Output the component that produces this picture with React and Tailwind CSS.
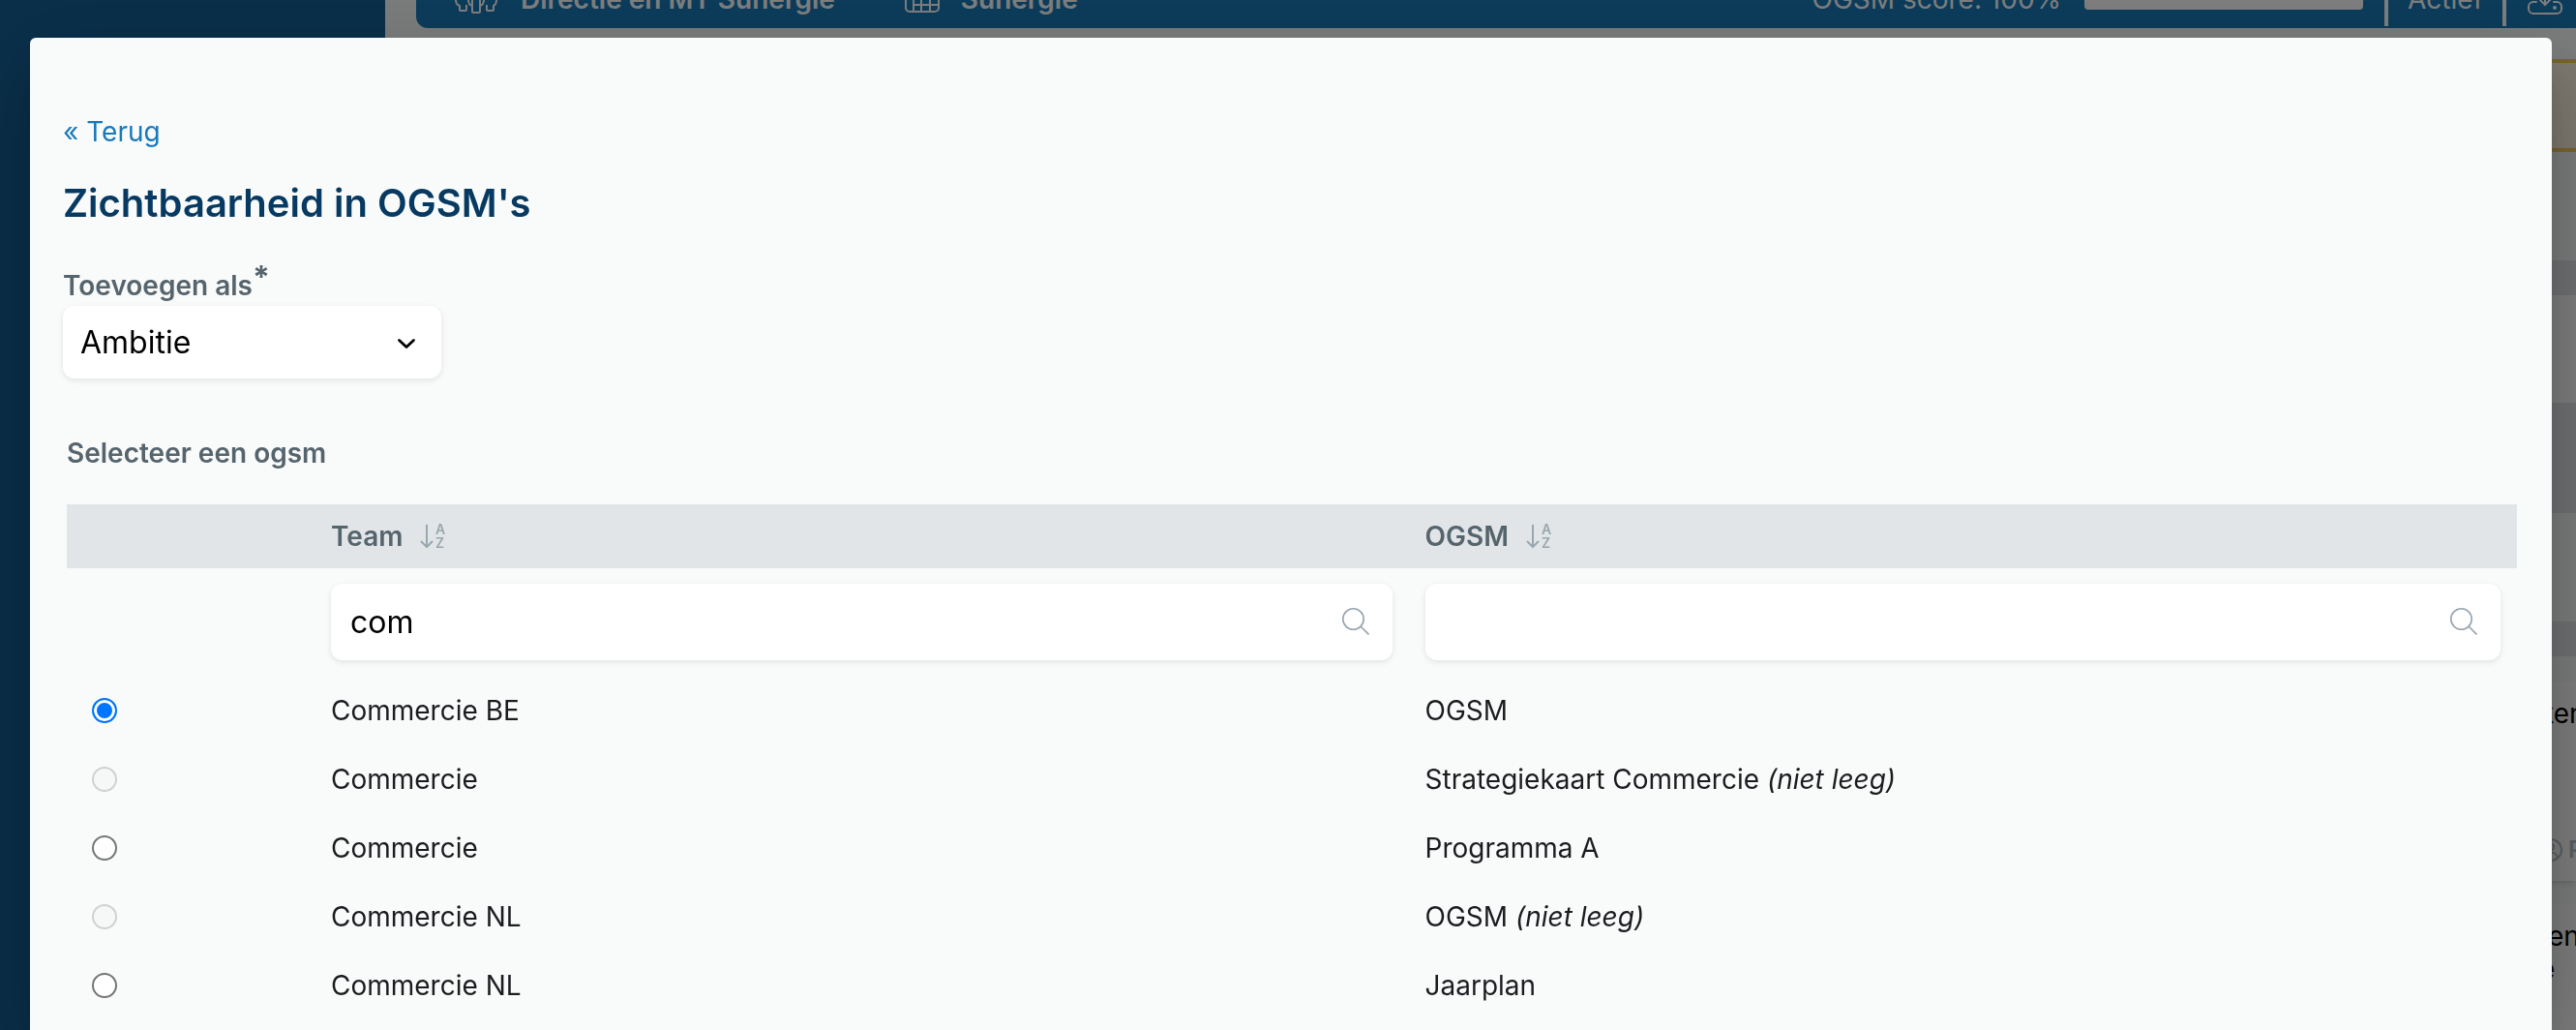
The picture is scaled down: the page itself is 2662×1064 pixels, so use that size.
import { useState } from 'react';

const rows = [
    { id: 1, team: 'Commercie BE', ogsm: 'OGSM', empty: true },
    { id: 2, team: 'Commercie', ogsm: 'Strategiekaart Commercie', empty: false },
    { id: 3, team: 'Commercie', ogsm: 'Programma A', empty: true },
    { id: 4, team: 'Commercie NL', ogsm: 'OGSM', empty: false },
    { id: 5, team: 'Commercie NL', ogsm: 'Jaarplan', empty: true },
];

function TeamIcon() {
    return (
        <svg width="46" height="30" viewBox="0 0 46 30" fill="none" stroke="currentColor" strokeWidth="2" strokeLinejoin="round" aria-hidden="true">
            <circle cx="8" cy="5" r="3" />
            <circle cx="22" cy="4" r="3" />
            <circle cx="36" cy="5" r="3" />
            <path d="M11 11H3c-1 0-2 1-2 2v3c0 3 1 5 4 6v4c0 1 0 1 1 1h5c1 0 1 0 1-1v-5" />
            <path d="M14 13v3c0 3 1 5 4 6v6c0 1 0 1 1 1h6c1 0 1 0 1-1v-6c3-1 4-3 4-6v-3c0-1-1-2-2-2H16c-1 0-2 1-2 2z" />
            <path d="M18 15v7M26 15v7" />
            <path d="M33 11h8c1 0 2 1 2 2v3c0 3-1 5-3 6v4c0 1 0 1-1 1h-5c-1 0-1 0-1-1v-5" />
        </svg>
    );
}

function GridIcon() {
    return (
        <svg width="36" height="28" viewBox="0 0 36 28" fill="none" stroke="currentColor" strokeWidth="2" aria-hidden="true">
            <rect x="1" y="1" width="34" height="26" rx="4" />
            <path d="M9 9v18M17 9v18M26 9v18M1 9h34M9 20h26" />
        </svg>
    );
}

function DownloadIcon() {
    return (
        <svg width="36" height="32" viewBox="0 0 36 32" fill="none" stroke="currentColor" strokeWidth="2" strokeLinecap="round" aria-hidden="true">
            <path d="M9 19H6a5 5 0 0 0-5 5v2a5 5 0 0 0 5 5h24a5 5 0 0 0 5-5v-2a5 5 0 0 0-5-5h-3" />
            <path d="M18 2v20M12 16l6 6 6-6" />
            <circle cx="28" cy="25" r="1" />
        </svg>
    );
}

function SortIcon() {
    return (
        <svg width="26" height="26" viewBox="0 0 26 26" fill="none" aria-hidden="true" className="text-[#9aa7ae]">
            <path d="M7 1v23M1 18l6 6 6-6" stroke="currentColor" strokeWidth="2" strokeLinejoin="round" />
            <text x="16" y="11" fontSize="14" fontWeight="600" fill="currentColor">A</text>
            <text x="16" y="25" fontSize="14" fontWeight="600" fill="currentColor">Z</text>
        </svg>
    );
}

function SearchIcon() {
    return (
        <svg width="28" height="28" viewBox="0 0 28 28" fill="none" stroke="#97a4ad" strokeWidth="1.6" aria-hidden="true" className="pointer-events-none absolute right-6 top-[25px]">
            <circle cx="11.5" cy="11.5" r="10.7" />
            <path d="M19 19l8.5 8.5" />
        </svg>
    );
}

function UserIcon() {
    return (
        <svg width="24" height="24" viewBox="0 0 24 24" fill="none" stroke="currentColor" strokeWidth="2" aria-hidden="true" className="shrink-0">
            <circle cx="12" cy="12" r="11" />
            <circle cx="12" cy="9" r="3" />
            <path d="M5 20c1-7 13-7 14 0" />
        </svg>
    );
}

function SearchField({ label, value, onChange }) {
    return (
        <div className="relative">
            <input
                type="text"
                aria-label={label}
                value={value}
                onChange={(e) => onChange(e.target.value)}
                className="block h-[79px] w-full rounded-xl bg-white pl-5 pr-16 text-[32px] text-black shadow-[0_2px_6px_rgba(0,0,0,0.1)] outline-none"
            />
            <SearchIcon />
        </div>
    );
}

// The page behind the dialog, scrolled down a little
function Page() {
    return (
        <div className="flex h-screen overflow-hidden bg-[#f9fbfa]">
            <aside className="w-[398px] shrink-0 bg-[#146095]" />
            <main className="-mt-[31px] min-w-0 flex-1 pl-8">
                <header className="flex h-[60px] items-center rounded-bl-xl bg-[#187ab8] pl-10 pr-[14px] text-[28px] text-white">
                    <TeamIcon />
                    <span className="ml-[22px] font-semibold">Directie en MT Sunergie</span>
                    <span className="ml-[72px]"><GridIcon /></span>
                    <span className="ml-[22px] font-semibold">Sunergie</span>
                    <span className="ml-auto">OGSM score: 100%</span>
                    <div className="ml-6 h-[22px] w-72 rounded bg-white" />
                    <div className="ml-[22px] flex h-14 items-center border-x-4 border-white px-5">Actief</div>
                    <span className="ml-[22px]"><DownloadIcon /></span>
                </header>
                <div className="mt-8 h-24 border-y-4 border-[#f3cb62] bg-[#fff6e3]" />
                <div className="mt-28 h-9 bg-[#e1e5e8]" />
                <div className="h-[111px] bg-white shadow-md" />
                <div className="h-[114px] bg-[#e1e5e8]" />
                <div className="h-28" />
                <div className="h-9 bg-[#e1e5e8]" />
                <div className="flex flex-col gap-6 pt-[26px] text-[28px] leading-[34px] text-black">
                    <div className="flex h-[206px] justify-end bg-white pt-4 shadow-md">
                        <div className="flex w-[38px] flex-col overflow-hidden whitespace-nowrap">
                            <span>ken</span>
                            <span className="mt-[108px] flex items-center gap-[6px] text-2xl font-semibold text-[#b3c0c8]">
                                <UserIcon />
                                P
                            </span>
                        </div>
                    </div>
                    <div className="flex h-[206px] justify-end bg-white pt-4 shadow-md">
                        <div className="w-[38px] overflow-hidden whitespace-nowrap">
                            ten
                            <br />e
                        </div>
                    </div>
                </div>
            </main>
        </div>
    );
}

export default function App() {
    const [type, setType] = useState('Ambitie');
    const [selected, setSelected] = useState(1);
    const [team, setTeam] = useState('com');
    const [ogsm, setOgsm] = useState('');

    const visible = rows.filter(row =>
        row.team.toLowerCase().includes(team.toLowerCase()) &&
        row.ogsm.toLowerCase().includes(ogsm.toLowerCase())
    );

    return (
        <div className="font-['Inter',sans-serif]">
            <Page />
            <div className="fixed inset-0 bg-black/50" />

            <div
                role="dialog"
                aria-labelledby="dialog-title"
                className="fixed bottom-0 left-[31px] right-[25px] top-[39px] overflow-hidden rounded-t-md bg-[#f9fbfa] pl-[34px] pr-8 pt-[77px] text-[28px] leading-10 text-[#1b1c20] shadow-[0_22px_30px_-14px_rgba(0,0,0,0.2),0_48px_76px_6px_rgba(0,0,0,0.14),0_18px_92px_16px_rgba(0,0,0,0.12)]"
            >
                <a href="#terug" className="block w-fit text-[#1879bd]">« Terug</a>
                <h1 id="dialog-title" className="mt-[30px] text-[40px] font-semibold leading-[48px] text-[#073a62]">
                    Zichtbaarheid in OGSM's
                </h1>

                <label htmlFor="type" className="mt-10 flex h-[42px] items-center font-semibold text-[#56646d]">
                    Toevoegen als<sup className="-top-2 text-[32px] font-bold leading-none">*</sup>
                </label>
                <div className="relative w-[391px]">
                    <select
                        id="type"
                        value={type}
                        onChange={(e) => setType(e.target.value)}
                        className="block h-[75px] w-full appearance-none rounded-xl bg-white px-[18px] text-[32px] text-black shadow-[0_2px_6px_rgba(0,0,0,0.1)] outline-none"
                    >
                        <option value="Ambitie">Ambitie</option>
                        <option value="Doelstelling">Doelstelling</option>
                    </select>
                    <svg width="20" height="12" viewBox="0 0 20 12" fill="none" stroke="black" strokeWidth="2.8" strokeLinecap="round" strokeLinejoin="round" aria-hidden="true" className="pointer-events-none absolute right-[26px] top-[33px]">
                        <path d="M2.5 2.5L10 9.5l7.5-7" />
                    </svg>
                </div>

                <section className="mt-[57px] px-1">
                    <h2 id="table-title" className="font-semibold text-[#56646d]">Selecteer een ogsm</h2>
                    <table aria-labelledby="table-title" className="mt-[33px] w-full table-fixed text-left">
                        <thead>
                            <tr className="h-[66px] bg-[#e1e5e8] text-[#56646d]">
                                <td className="w-64" />
                                <th className="w-[44.65%] px-[17px] font-semibold">
                                    <button className="flex items-center gap-[18px]">Team <SortIcon /></button>
                                </th>
                                <th className="px-[17px] font-semibold">
                                    <button className="flex items-center gap-[18px]">OGSM <SortIcon /></button>
                                </th>
                            </tr>
                        </thead>
                        <tbody>
                            <tr>
                                <td />
                                <td className="px-[17px] py-4">
                                    <SearchField label="Zoek team" value={team} onChange={setTeam} />
                                </td>
                                <td className="px-[17px] py-4">
                                    <SearchField label="Zoek OGSM" value={ogsm} onChange={setOgsm} />
                                </td>
                            </tr>
                            {visible.map(row => (
                                <tr key={row.id} className="h-[71px]">
                                    <td className="px-[26px]">
                                        <input
                                            type="radio"
                                            name="ogsm"
                                            id={`ogsm-${row.id}`}
                                            checked={selected === row.id}
                                            disabled={!row.empty}
                                            onChange={() => setSelected(row.id)}
                                            className="block size-[26px] appearance-none rounded-full border-2 border-[#767676] bg-white checked:border-[#0075ff] checked:bg-[#0075ff] checked:shadow-[inset_0_0_0_3px_white] disabled:border-[#d0d2d1] disabled:bg-[#f6f7f7]"
                                        />
                                    </td>
                                    <td className="px-[17px]">
                                        <label htmlFor={`ogsm-${row.id}`}>{row.team}</label>
                                    </td>
                                    <td className="px-[17px]">
                                        {row.ogsm} {!row.empty && <em>(niet leeg)</em>}
                                    </td>
                                </tr>
                            ))}
                        </tbody>
                    </table>
                </section>
            </div>
        </div>
    );
}
